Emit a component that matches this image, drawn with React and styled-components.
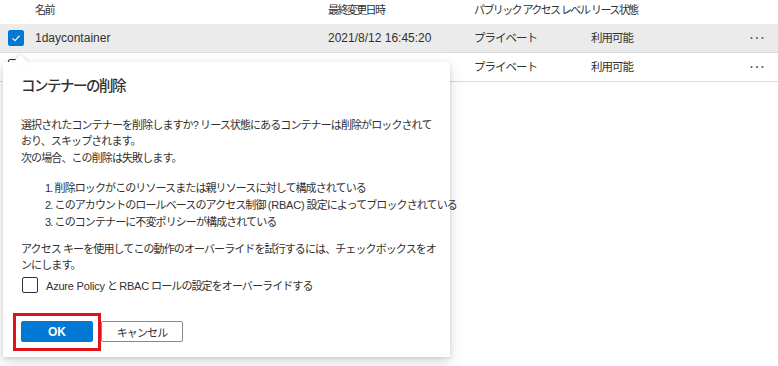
import React from "react";
import styled, { createGlobalStyle } from "styled-components";

const GlobalStyle = createGlobalStyle`
  body {
    margin: 0;
    background: #ffffff;
    font-family: "Segoe UI", "Liberation Sans", "Noto Sans CJK JP", sans-serif;
    color: #323130;
    overflow: hidden;
  }
`;

const containers = [
    { name: "1daycontainer", modified: "2021/8/12 16:45:20", access: "プライベート", lease: "利用可能", selected: true },
    { name: "", modified: "", access: "プライベート", lease: "利用可能", selected: false },
];

const CheckMark = () => (
    <svg width="12" height="12" viewBox="0 0 12 12">
        <polyline points="2.5,6.3 5,8.6 9.6,3.6" fill="none" stroke="#ffffff" strokeWidth="1.1" />
    </svg>
);

const MoreDots = () => (
    <svg width="14" height="4" viewBox="0 0 14 4">
        <circle cx="1.5" cy="2" r="1.1" fill="#605e5c" />
        <circle cx="7" cy="2" r="1.1" fill="#605e5c" />
        <circle cx="12.5" cy="2" r="1.1" fill="#605e5c" />
    </svg>
);

const App = () => {
    return (
        <>
            <GlobalStyle />
            <Page>
                <HeaderRow>
                    <span />
                    <HeadCell>名前</HeadCell>
                    <HeadCell>最終変更日時</HeadCell>
                    <HeadCell>パブリック アクセス レベル</HeadCell>
                    <HeadCell>リース状態</HeadCell>
                    <span />
                </HeaderRow>
                {containers.map((c, i) => (
                    <Row key={i} $selected={c.selected}>
                        <CheckCell>
                            <RowCheck $checked={c.selected}>{c.selected && <CheckMark />}</RowCheck>
                        </CheckCell>
                        <Cell>{c.name}</Cell>
                        <Cell>{c.modified}</Cell>
                        <Cell $jp>{c.access}</Cell>
                        <Cell $jp>{c.lease}</Cell>
                        <MoreCell><MoreDots /></MoreCell>
                    </Row>
                ))}

                <Callout>
                    <Beak />
                    <Title>コンテナーの削除</Title>
                    <Text>選択されたコンテナーを削除しますか? リース状態にあるコンテナーは削除がロックされており、スキップされます。</Text>
                    <Text $gap={1}>次の場合、この削除は失敗します。</Text>
                    <ReasonList>
                        <li>削除ロックがこのリソースまたは親リソースに対して構成されている</li>
                        <li>このアカウントのロールベースのアクセス制御 <Latin>(RBAC)</Latin> 設定によってブロックされている</li>
                        <li>このコンテナーに不変ポリシーが構成されている</li>
                    </ReasonList>
                    <Text $gap={10}>アクセス キーを使用してこの動作のオーバーライドを試行するには、チェックボックスをオンにします。</Text>
                    <CheckRow>
                        <BoxCheck />
                        <span><Latin>Azure Policy</Latin> と <Latin>RBAC</Latin> ロールの設定をオーバーライドする</span>
                    </CheckRow>
                    <Buttons>
                        <PrimaryButton>OK</PrimaryButton>
                        <DefaultButton>キャンセル</DefaultButton>
                    </Buttons>
                </Callout>
            </Page>
        </>
    );
};
export default App;

const Page = styled.div`
    position: relative;
    width: 778px;
    height: 366px;
    overflow: hidden;
    font-size: 12px;
`;

const columns = "35px 293px 146px 117px 1fr 28px";

const HeaderRow = styled.div`
    display: grid;
    grid-template-columns: ${columns};
    height: 24px;
    padding-top: 2px;
    box-sizing: border-box;
    line-height: 16px;
`;

const HeadCell = styled.div`
    color: #323130;
    white-space: nowrap;
    font-size: 11px;
    letter-spacing: -1.6px;
`;

const Row = styled.div`
    display: grid;
    grid-template-columns: ${columns};
    align-items: center;
    height: 29px;
    box-sizing: border-box;
    border-bottom: 1px solid #dcdcdc;
    background: ${(p) => (p.$selected ? "#ebebeb" : "#ffffff")};
`;

const Cell = styled.div`
    white-space: nowrap;
    line-height: 16px;
    font-size: ${(p) => (p.$jp ? "11.5px" : "12px")};
    letter-spacing: ${(p) => (p.$jp ? "-1px" : "0")};
`;

const CheckCell = styled.div`
    display: flex;
    padding-left: 8px;
`;

const RowCheck = styled.div`
    width: 16px;
    height: 16px;
    box-sizing: border-box;
    border-radius: 2px;
    display: flex;
    align-items: center;
    justify-content: center;
    background: ${(p) => (p.$checked ? "#0078d4" : "#ffffff")};
    border: 1px solid ${(p) => (p.$checked ? "#0078d4" : "#323130")};
`;

const MoreCell = styled.div`
    display: flex;
    align-items: center;
`;

const Callout = styled.div`
    position: absolute;
    left: 3px;
    top: 62px;
    width: 447px;
    box-sizing: border-box;
    padding: 13px 11px 15px 18px;
    background: #ffffff;
    box-shadow: 0 6px 14px rgba(0, 0, 0, 0.14), 0 1px 4px rgba(0, 0, 0, 0.12);
    font-size: 11px;
    letter-spacing: -0.9px;
`;

const Latin = styled.span`
    letter-spacing: -0.2px;
`;

const Beak = styled.div`
    position: absolute;
    left: 11.5px;
    top: -5.5px;
    width: 11px;
    height: 11px;
    background: #ffffff;
    transform: rotate(45deg);
    box-shadow: -1px -1px 3px rgba(0, 0, 0, 0.1);
`;

const Title = styled.h2`
    margin: 0 0 20px;
    font-size: 14.5px;
    letter-spacing: -1.5px;
    font-weight: 500;
    line-height: 22px;
    color: #323130;
`;

const Text = styled.p`
    margin: ${(p) => p.$gap || 0}px 0 0;
    line-height: 16px;
    color: #323130;
`;

const ReasonList = styled.ol`
    margin: 14px 0 0;
    padding-left: 24px;
    list-style: decimal inside;
    line-height: 17px;
    li {
        white-space: nowrap;
    }
`;

const CheckRow = styled.label`
    display: flex;
    align-items: center;
    gap: 8px;
    margin-top: 4px;
    height: 16px;
    padding-left: 1px;
`;

const BoxCheck = styled.span`
    width: 16px;
    height: 16px;
    box-sizing: border-box;
    border: 1px solid #323130;
    border-radius: 2px;
    background: #ffffff;
`;

const Buttons = styled.div`
    display: flex;
    gap: 8px;
    margin-top: 28px;
`;

const PrimaryButton = styled.button`
    position: relative;
    width: 72px;
    height: 21px;
    border: 1px solid #0078d4;
    border-radius: 2px;
    background: #0078d4;
    color: #ffffff;
    font-family: inherit;
    font-size: 12px;
    font-weight: 700;
    letter-spacing: 0;
    padding: 0;

    /* red highlight frame drawn over the screenshot */
    &::after {
        content: "";
        position: absolute;
        inset: -9px -9px -10px -9px;
        border: 3px solid #e2121c;
    }
`;

const DefaultButton = styled.button`
    width: 82px;
    height: 21px;
    border: 1px solid #8a8886;
    border-radius: 2px;
    background: #ffffff;
    color: #323130;
    font-family: inherit;
    font-size: 11px;
    letter-spacing: -0.9px;
    padding: 0;
`;
